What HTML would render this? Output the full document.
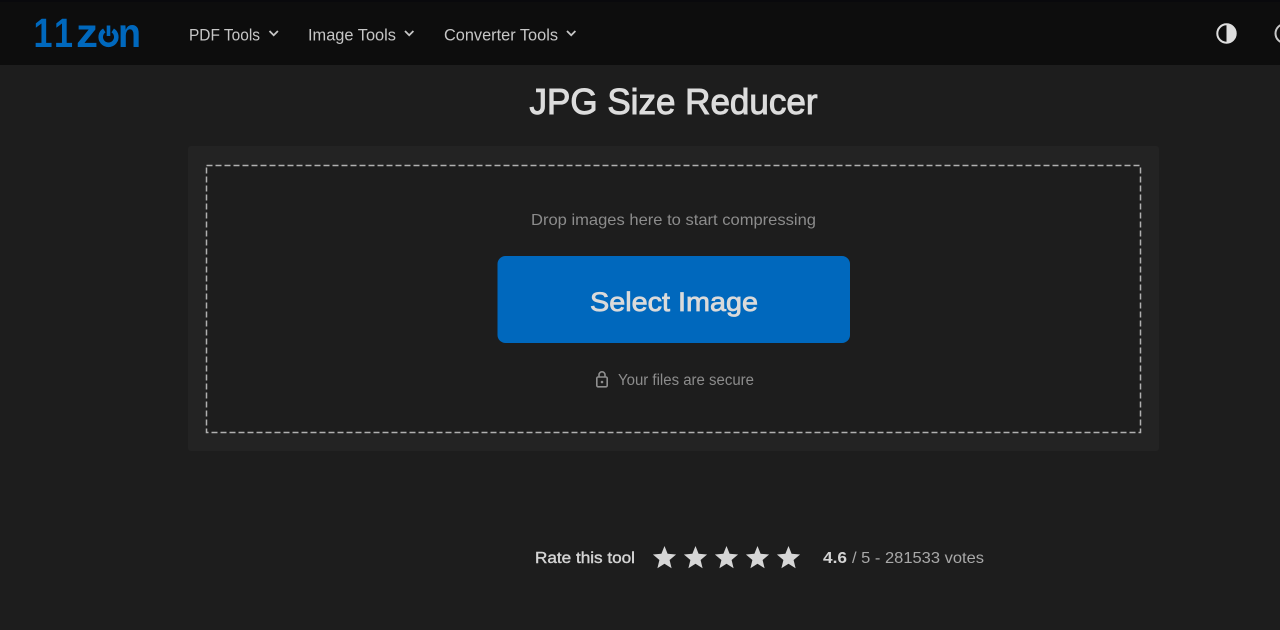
<!DOCTYPE html>
<html lang="en">
<head>
<meta charset="utf-8">
<title>JPG Size Reducer</title>
<style>
html,body{margin:0;padding:0;width:1280px;height:630px;overflow:hidden;background:#1d1d1d}
svg{display:block;font-family:"Liberation Sans",Arial,sans-serif}
</style>
</head>
<body>
<svg width="1280" height="630" viewBox="0 0 1280 630" xmlns="http://www.w3.org/2000/svg">
<rect width="1280" height="630" fill="#1d1d1d"/>
<rect width="1280" height="65" fill="#0d0d0d"/>
<rect width="1280" height="2" fill="#09090c"/>

<!-- logo -->
<g fill="#0068bd" font-weight="700" font-size="41">
<text x="33.500" y="47" textLength="19" lengthAdjust="spacingAndGlyphs">1</text>
<text x="54" y="47" textLength="19" lengthAdjust="spacingAndGlyphs">1</text>
<text x="76" y="47" textLength="22" lengthAdjust="spacingAndGlyphs">z</text>
<text x="118" y="47" textLength="23" lengthAdjust="spacingAndGlyphs">n</text>
</g>
<path d="M104.300 30.400A7.800 7.800 0 1 0 112.700 30.400" fill="none" stroke="#0068bd" stroke-width="4.600"/>
<path d="M108.500 25.500V36" stroke="#0068bd" stroke-width="3.600"/>

<!-- nav -->
<g fill="#c6c6c6" font-size="16.500">
<text x="189" y="40.500" textLength="71" lengthAdjust="spacingAndGlyphs">PDF Tools</text>
<text x="308" y="40.500" textLength="88" lengthAdjust="spacingAndGlyphs">Image Tools</text>
<text x="444" y="40.500" textLength="114" lengthAdjust="spacingAndGlyphs">Converter Tools</text>
</g>
<g fill="none" stroke="#c6c6c6" stroke-width="1.800">
<path d="M269.500 31l4.200 4.200 4.200-4.200"/>
<path d="M405 31l4.200 4.200 4.200-4.200"/>
<path d="M567 31l4.200 4.200 4.200-4.200"/>
</g>

<!-- theme toggle -->
<circle cx="1226.500" cy="33.500" r="9.200" fill="none" stroke="#dedede" stroke-width="2"/>
<path d="M1226.500 24.300a9.200 9.200 0 0 1 0 18.400z" fill="#dedede"/>
<circle cx="1285" cy="33.500" r="9.500" fill="none" stroke="#c8c8c8" stroke-width="2"/>

<!-- title -->
<text x="529.500" y="114" font-size="36" fill="#dcdcdc" stroke="#dcdcdc" stroke-width="1" textLength="288" lengthAdjust="spacingAndGlyphs">JPG Size Reducer</text>

<!-- card -->
<rect x="188" y="146" width="971" height="305" rx="3" fill="#232323"/>
<rect x="206.500" y="165.500" width="934" height="267" fill="#1d1d1d" stroke="#b0b0b0" stroke-width="1.500" stroke-dasharray="6 3"/>

<text x="531" y="225" font-size="16" fill="#8c8c8c" textLength="285" lengthAdjust="spacingAndGlyphs">Drop images here to start compressing</text>

<rect x="497.500" y="256" width="352.500" height="87" rx="8" fill="#0068bd"/>
<text x="590" y="311" font-size="27" fill="#dadada" stroke="#dadada" stroke-width="0.800" textLength="168" lengthAdjust="spacingAndGlyphs">Select Image</text>

<!-- lock -->
<rect x="596.800" y="377" width="10.400" height="9.800" rx="1.300" fill="none" stroke="#8f8f8f" stroke-width="1.600"/>
<path d="M599 377v-2.200a3 3 0 0 1 6 0V377" fill="none" stroke="#8f8f8f" stroke-width="1.600"/>
<circle cx="602" cy="382" r="1.300" fill="#8f8f8f"/>
<text x="618" y="385" font-size="15.500" fill="#8c8c8c" textLength="136" lengthAdjust="spacingAndGlyphs">Your files are secure</text>

<!-- rating -->
<text x="535" y="563" font-size="16" fill="#d4d4d4" stroke="#d4d4d4" stroke-width="0.400" textLength="100" lengthAdjust="spacingAndGlyphs">Rate this tool</text>
<g fill="#d6d6d6">
<path d="M664.500 546l3.100 7.800 8.500 .7-6.500 5.500 2 8.300-7.100-4.500-7.100 4.500 2-8.300-6.500-5.500 8.500-.7z"/>
<path d="M695.500 546l3.100 7.800 8.500 .7-6.500 5.500 2 8.300-7.100-4.500-7.100 4.500 2-8.300-6.500-5.500 8.500-.7z"/>
<path d="M726.500 546l3.100 7.800 8.500 .7-6.500 5.500 2 8.300-7.100-4.500-7.100 4.500 2-8.300-6.500-5.500 8.500-.7z"/>
<path d="M757.500 546l3.100 7.800 8.500 .7-6.500 5.500 2 8.300-7.100-4.500-7.100 4.500 2-8.300-6.500-5.500 8.500-.7z"/>
<path d="M788.500 546l3.100 7.800 8.500 .7-6.500 5.500 2 8.300-7.100-4.500-7.100 4.500 2-8.300-6.500-5.500 8.500-.7z"/>
</g>
<text x="823" y="563" font-size="16" font-weight="700" fill="#d4d4d4" textLength="24" lengthAdjust="spacingAndGlyphs">4.6</text>
<text x="852" y="563" font-size="16" fill="#a8a8a8" textLength="132" lengthAdjust="spacingAndGlyphs">/ 5 - 281533 votes</text>
</svg>
</body>
</html>
